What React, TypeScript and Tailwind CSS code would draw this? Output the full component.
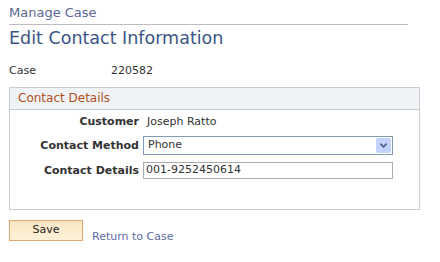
import { ChevronDown } from 'lucide-react'

const font = { fontFamily: '"DejaVu Sans", Verdana, sans-serif' }

function Field({ label, children }: { label: string; children: React.ReactNode }) {
  return (
    <div className="flex items-center">
      <div className="w-[133px] pr-[4px] text-right text-[11px] leading-[14px] font-bold text-[#333333]">{label}</div>
      {children}
    </div>
  )
}

export default function App() {
  return (
    <div className="w-[440px] h-[262px] bg-white pl-[9px] pt-[5px]" style={font}>
      <div className="w-[399px] border-b border-[#bdbdbd] pb-[4px] text-[13px] leading-[15px] text-[#5b6794]">
        Manage Case
      </div>
      <h1 className="mt-[2px] text-[17.5px] leading-[22px] text-[#3b5585]">Edit Contact Information</h1>

      <div className="mt-[15px] flex text-[11px] leading-[14px] text-[#333333]">
        <span className="w-[102px]">Case</span>
        <span>220582</span>
      </div>

      <div className="mt-[9px] w-[411px] h-[123px] border border-[#c9cdd2]">
        <div className="h-[22px] border-b border-[#c9cdd2] bg-[#eff3f5] pl-[8px] text-[12px] leading-[21px] text-[#b2501e]">
          Contact Details
        </div>
        <div className="flex flex-col pt-[5px]">
          <Field label="Customer">
            <span className="pl-[4px] text-[11px] leading-[14px] text-[#333333]">Joseph Ratto</span>
          </Field>
          <div className="h-[7px]" />
          <Field label="Contact Method">
            <div className="flex h-[19px] w-[250px] items-center justify-between border border-[#7f9db9] bg-white pl-[4px] pr-[1px]">
              <span className="text-[11px] text-[#333333]">Phone</span>
              <span className="flex h-[15px] w-[15px] items-center justify-center rounded-[2px] bg-[#c3d3fd]">
                <ChevronDown size={11} strokeWidth={3.5} className="text-[#4d6185]" />
              </span>
            </div>
          </Field>
          <div className="h-[7px]" />
          <Field label="Contact Details">
            <div className="flex h-[17px] w-[250px] items-center border border-[#acacac] bg-white pl-[2px]">
              <span className="text-[11px] text-[#333333]">001-9252450614</span>
            </div>
          </Field>
        </div>
      </div>

      <div className="mt-[10px] flex items-end gap-[9px]">
        <button className="h-[21px] w-[74px] border border-[#e0a96c] bg-gradient-to-b from-[#fbe6c2] to-[#fdf0da] text-[11px] text-[#222222]" style={font}>
          Save
        </button>
        <a className="text-[11px] leading-[14px] text-[#5d6aa3] -mb-[3px]">Return to Case</a>
      </div>
    </div>
  )
}
